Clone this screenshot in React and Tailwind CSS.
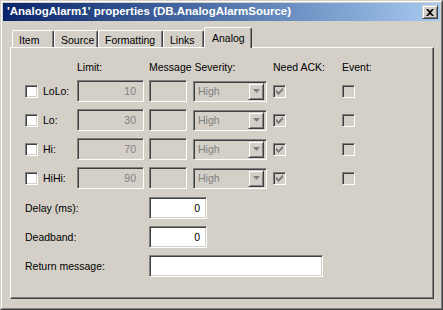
const sunken =
  'border border-t-[#808080] border-l-[#808080] border-b-white border-r-white shadow-[inset_1px_1px_#404040,inset_-1px_-1px_#d4d0c8]';
const raised =
  'border border-t-[#d4d0c8] border-l-[#d4d0c8] border-b-[#404040] border-r-[#404040] shadow-[inset_1px_1px_#ffffff,inset_-1px_-1px_#808080]';

const CheckBox = ({ checked = false, disabled = false }) => (
  <div
    className={`w-[13px] h-[13px] shrink-0 flex items-center justify-center ${sunken} ${
      disabled ? 'bg-[#d4d0c8]' : 'bg-white'
    }`}
  >
    {checked ? (
      <svg width="7" height="7" viewBox="0 0 7 7">
        <path d="M0 2h1v1h1v1h1v-1h1v-1h1v-1h1v-1h1v3h-1v1h-1v1h-1v1h-1v1h-1v-1h-1v-1h-1v-1h-1z" fill={disabled ? '#808080' : '#000'} />
      </svg>
    ) : null}
  </div>
);

const Severity = () => (
  <div className={`w-[74px] h-[21px] flex items-center bg-[#d4d0c8] ${sunken} p-[2px]`}>
    <span className="flex-1 pl-[2px] text-[#808080]">High</span>
    <div className={`w-[16px] h-[17px] flex items-center justify-center ${raised}`}>
      <svg width="7" height="4" viewBox="0 0 7 4">
        <path d="M0 0h7l-3.5 4z" fill="#808080" />
      </svg>
    </div>
  </div>
);

const alarms = [
  { name: 'LoLo:', limit: 10 },
  { name: 'Lo:', limit: 30 },
  { name: 'Hi:', limit: 70 },
  { name: 'HiHi:', limit: 90 },
];

const tabs = [
  ['Item', 'w-[42px]'],
  ['Source', 'w-[44px]'],
  ['Formatting', 'w-[65px]'],
  ['Links', 'w-[41px]'],
];

export default function App() {
  return (
    <div className="w-[443px] h-[310px] bg-[#d4d0c8] text-black text-[10.5px] leading-none font-['Liberation_Sans',Arial,sans-serif] border border-t-[#d4d0c8] border-l-[#d4d0c8] border-b-[#404040] border-r-[#404040]">
      <div className="w-full h-full border border-t-white border-l-white border-b-[#808080] border-r-[#808080] p-px flex flex-col">
        {/* title bar */}
        <div className="h-[18px] flex items-center bg-linear-to-r from-[#0a246a] to-[#a6caf0]">
          <span className="flex-1 pl-[4px] text-white font-bold text-[11.5px]">
            'AnalogAlarm1' properties (DB.AnalogAlarmSource)
          </span>
          <div className={`w-[16px] h-[14px] mr-[2px] bg-[#d4d0c8] flex items-center justify-center ${raised}`}>
            <svg width="8" height="7" viewBox="0 0 8 7">
              <path d="M0 0h2l2 2 2-2h2l-3 3.5 3 3.5h-2l-2-2-2 2h-2l3-3.5z" fill="#000" />
            </svg>
          </div>
        </div>

        {/* tabs */}
        <div className="relative z-10 mt-[6px] ml-[9px] h-[20px] flex items-end">
          {tabs.map(([label, w]) => (
            <div
              key={label}
              className={`${w} h-[17px] pl-[6px] pt-[4px] border-t border-l border-r border-t-white border-l-white border-r-[#404040] rounded-t-[2px] shadow-[inset_-1px_0_#808080]`}
            >
              {label}
            </div>
          ))}
          <div className="w-[48px] h-[21px] -mb-px pl-[7px] pt-[5px] bg-[#d4d0c8] border-t border-l border-r border-t-white border-l-white border-r-[#404040] rounded-t-[2px] shadow-[inset_-1px_0_#808080]">
            Analog
          </div>
        </div>

        {/* panel */}
        <div className="ml-[7px] w-[424px] h-[252px] border border-t-white border-l-white border-b-[#404040] border-r-[#404040] shadow-[inset_-1px_-1px_#808080] pl-[14px] pt-[13px] flex flex-col">
          <div className="h-[13px] flex items-center">
            <span className="w-[52px]" />
            <span className="w-[72px]">Limit:</span>
            <span className="w-[124px]">Message Severity:</span>
            <span className="w-[69px]">Need ACK:</span>
            <span>Event:</span>
          </div>

          <div className="mt-[6px] flex flex-col gap-[7px]">
            {alarms.map((a) => (
              <div key={a.name} className="h-[22px] flex items-center">
                <div className="w-[52px] flex items-center gap-[5px]">
                  <CheckBox />
                  <span>{a.name}</span>
                </div>
                <div className={`w-[67px] h-[22px] bg-[#d4d0c8] ${sunken} flex items-center justify-end pr-[7px] text-[#808080]`}>
                  {a.limit}
                </div>
                <div className={`ml-[5px] w-[38px] h-[22px] bg-[#d4d0c8] ${sunken}`} />
                <div className="ml-[6px]">
                  <Severity />
                </div>
                <div className="ml-[6px]">
                  <CheckBox checked disabled />
                </div>
                <div className="ml-[56px]">
                  <CheckBox disabled />
                </div>
              </div>
            ))}
          </div>

          <div className="mt-[8px] flex flex-col gap-[7px]">
            <div className="h-[22px] flex items-center">
              <span className="w-[124px]">Delay (ms):</span>
              <div className={`w-[58px] h-[22px] bg-white ${sunken} flex items-center justify-end pr-[6px]`}>0</div>
            </div>
            <div className="h-[22px] flex items-center">
              <span className="w-[124px]">Deadband:</span>
              <div className={`w-[58px] h-[22px] bg-white ${sunken} flex items-center justify-end pr-[6px]`}>0</div>
            </div>
            <div className="h-[22px] flex items-center">
              <span className="w-[124px]">Return message:</span>
              <div className={`w-[174px] h-[22px] bg-white ${sunken}`} />
            </div>
          </div>
        </div>
      </div>
    </div>
  );
}
